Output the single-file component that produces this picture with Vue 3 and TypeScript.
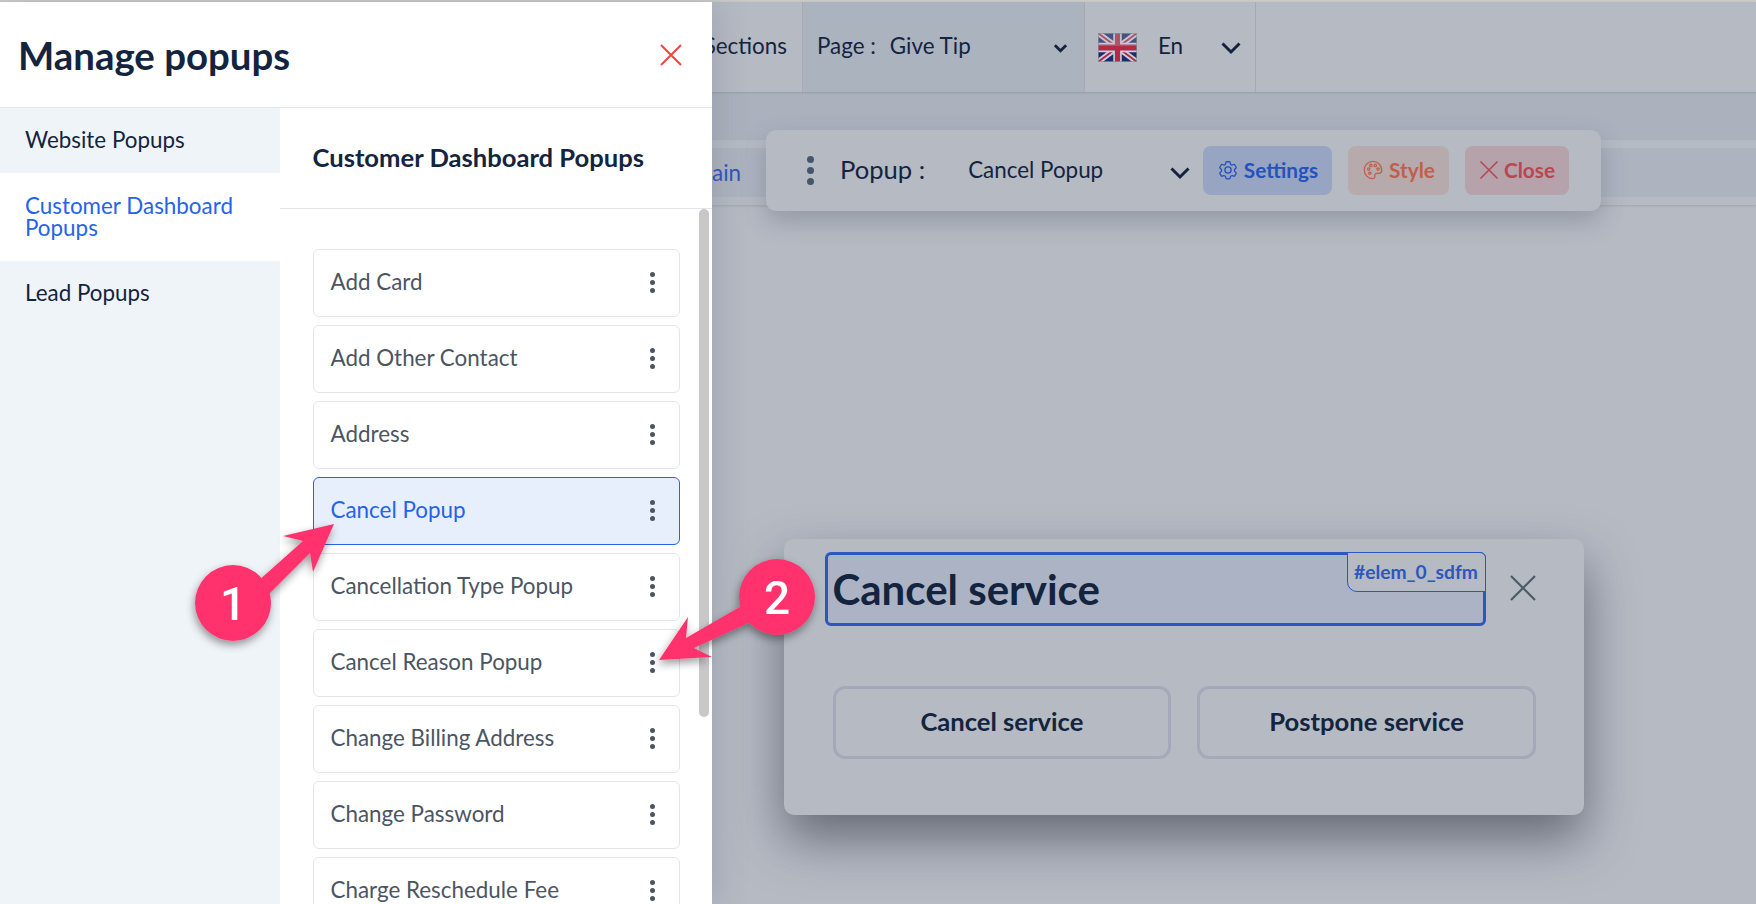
<script setup lang="ts">
const tabs = [
  { label: 'Website Popups', active: false },
  { label: 'Customer Dashboard Popups', active: true },
  { label: 'Lead Popups', active: false },
]

const popups = [
  'Add Card',
  'Add Other Contact',
  'Address',
  'Cancel Popup',
  'Cancellation Type Popup',
  'Cancel Reason Popup',
  'Change Billing Address',
  'Change Password',
  'Charge Reschedule Fee',
]

const gearPath =
  'M9.6 3.9c.1-.5.6-.9 1.1-.9h2.6c.5 0 1 .4 1.1.9l.2 1.3c.1.4.4.7.7.9l.5.3c.3.2.7.2 1.1.1l1.2-.5c.5-.2 1.1 0 1.4.5l1.3 2.2c.3.5.1 1.1-.3 1.4l-1 .8c-.3.3-.5.7-.5 1.1v.6c0 .4.2.8.5 1.1l1 .8c.4.3.6.9.3 1.4l-1.3 2.2c-.3.5-.9.7-1.4.5l-1.2-.5c-.4-.1-.8-.1-1.1.1l-.5.3c-.3.2-.6.5-.7.9l-.2 1.3c-.1.5-.6.9-1.1.9h-2.6c-.5 0-1-.4-1.1-.9l-.2-1.3c-.1-.4-.4-.7-.7-.9l-.5-.3c-.3-.2-.7-.2-1.1-.1l-1.2.5c-.5.2-1.1 0-1.4-.5l-1.3-2.2c-.3-.5-.1-1.1.3-1.4l1-.8c.3-.3.5-.7.5-1.1v-.6c0-.4-.2-.8-.5-1.1l-1-.8c-.4-.3-.6-.9-.3-1.4l1.3-2.2c.3-.5.9-.7 1.4-.5l1.2.5c.4.1.8.1 1.1-.1l.5-.3c.3-.2.6-.5.7-.9z'
</script>

<template>
  <div class="screen">
    <div class="topbar">
      <div class="cell cell--sections">Sections</div>
      <div class="cell cell--page">
        <span class="page-label">Page :</span>
        <span class="page-name">Give Tip</span>
        <svg class="chevron chevron--small" viewBox="0 0 16 10"><path d="M2 2l6 6 6-6" /></svg>
      </div>
      <div class="cell cell--lang">
        <svg class="flag" viewBox="0 0 60 40" preserveAspectRatio="none">
          <rect width="60" height="40" fill="#1c2a6e" />
          <path d="M0 0l60 40M60 0L0 40" stroke="#c9ced8" stroke-width="8" />
          <path d="M0 0l60 40M60 0L0 40" stroke="#b22a47" stroke-width="2.6" />
          <path d="M30 0v40M0 20h60" stroke="#c9ced8" stroke-width="13" />
          <path d="M30 0v40M0 20h60" stroke="#b22a47" stroke-width="8" />
          <rect width="60" height="18" fill="#b5bac3" opacity="0.28" />
          <rect x="0.5" y="0.5" width="59" height="39" fill="none" stroke="#8c919c" />
        </svg>
        <span class="lang-name">En</span>
        <svg class="chevron" viewBox="0 0 22 14"><path d="M2.5 2.5L11 11l8.5-8.5" /></svg>
      </div>
    </div>

    <div class="band"></div>
    <div class="strip">
      <div class="strip-inner"><span class="domain">Domain</span></div>
    </div>

    <div class="toolbar">
      <span class="grip"><i></i><i></i><i></i></span>
      <span class="toolbar-label">Popup :</span>
      <span class="toolbar-value">Cancel Popup</span>
      <svg class="chevron toolbar-chevron" viewBox="0 0 22 14"><path d="M2.5 2.5L11 11l8.5-8.5" /></svg>
      <button class="tool tool--settings">
        <svg class="tool-icon" viewBox="0 0 24 24">
          <path :d="gearPath" />
          <circle cx="12" cy="12" r="3.4" />
        </svg>
        Settings
      </button>
      <button class="tool tool--style">
        <svg class="tool-icon" viewBox="0 0 24 24">
          <path d="M12 2.500C6.500 2.500 2.500 6.800 2.500 12c0 5.300 4.200 9.500 9 9.500 2 0 2.800-1.300 2.500-2.800-.3-1.500.4-3 2.200-3h2.300c1.900 0 3-1.300 3-3.300 0-5.500-4.200-9.900-9.500-9.900z" />
          <circle cx="7.300" cy="11" r="1.300" />
          <circle cx="9.600" cy="7" r="1.300" />
          <circle cx="14.500" cy="7" r="1.300" />
          <circle cx="17.500" cy="11" r="1.300" />
          <circle cx="8.500" cy="15.500" r="1.300" />
        </svg>
        Style
      </button>
      <button class="tool tool--close">
        <svg class="tool-icon tool-icon--close" viewBox="0 0 20 20"><path d="M1.500 1.500l17 17M18.500 1.500l-17 17" /></svg>
        Close
      </button>
    </div>

    <div class="dialog">
      <div class="dialog-head">
        <div class="heading-box">
          <span class="heading-text">Cancel service</span>
          <span class="elem-tag">#elem_0_sdfm</span>
        </div>
        <svg class="dialog-x" viewBox="0 0 26 26"><path d="M1 1l24 24M25 1L1 25" /></svg>
      </div>
      <div class="dialog-actions">
        <button class="outline">Cancel service</button>
        <button class="outline">Postpone service</button>
      </div>
    </div>

    <aside class="drawer">
      <header class="drawer-head">
        <h1>Manage popups</h1>
        <svg class="drawer-x" viewBox="0 0 22 22"><path d="M1 1l20 20M21 1L1 21" /></svg>
      </header>
      <div class="drawer-body">
        <nav class="tabs">
          <a v-for="tab in tabs" :key="tab.label" class="tab" :class="{ 'tab--active': tab.active }">{{ tab.label }}</a>
          <div class="tabs-rest"></div>
        </nav>
        <section class="panel">
          <h2>Customer Dashboard Popups</h2>
          <div class="list">
            <div v-for="name in popups" :key="name" class="row" :class="{ 'row--active': name === 'Cancel Popup' }">
              <span class="row-name">{{ name }}</span>
              <span class="dots"><i></i><i></i><i></i></span>
            </div>
          </div>
          <div class="scrollbar"></div>
        </section>
      </div>
    </aside>

    <svg class="callouts" viewBox="0 0 1756 904">
      <defs>
        <filter id="callout-shadow" x="-30%" y="-30%" width="160%" height="160%">
          <feDropShadow dx="-1" dy="4" stdDeviation="4" flood-color="#000" flood-opacity="0.4" />
        </filter>
      </defs>
      <g class="callout" filter="url(#callout-shadow)">
        <polygon points="334,524 283,536 303,541 248,590 261,602 310,553 313,572" />
        <circle cx="233" cy="603" r="38" />
        <text x="233" y="620">1</text>
      </g>
      <g class="callout" filter="url(#callout-shadow)">
        <polygon points="659,660 688,617 686,638 745,604 755,620 694,648 712,657" />
        <circle cx="777" cy="597" r="38" />
        <text x="777" y="614">2</text>
      </g>
    </svg>
  </div>
</template>

<style>
html,
body {
  margin: 0;
  overflow: hidden;
}
</style>

<style scoped>
.screen {
  position: relative;
  width: 1756px;
  height: 904px;
  overflow: hidden;
  padding-top: 2px;
  box-sizing: border-box;
  background: #b5bac3;
  font-family: Lato, 'Liberation Sans', sans-serif;
  color: #14243f;
}

.screen::before {
  content: '';
  position: absolute;
  top: 0;
  left: 0;
  right: 0;
  height: 2px;
  background: #c9cac8;
}

.topbar {
  display: flex;
  height: 90px;
  font-size: 22.4px;
  box-shadow: 0 1px 2px rgba(80, 88, 104, 0.25);
  position: relative;
}

.cell {
  display: flex;
  align-items: center;
  border-right: 1px solid #a4abb7;
  box-sizing: border-box;
  padding-bottom: 3px;
}

.cell--sections {
  width: 803px;
  justify-content: flex-end;
  padding-right: 15px;
}

.cell--page {
  width: 282px;
  padding-left: 14px;
  background: #abb3bf;
}

.page-name {
  margin-left: 14px;
}

.chevron {
  flex: none;
  width: 22px;
  height: 14px;
  fill: none;
  stroke: #14243f;
  stroke-width: 3;
}

.chevron--small {
  width: 15px;
  height: 10px;
  margin-left: auto;
  margin-right: 16px;
  margin-top: 4px;
}

.cell--lang {
  width: 171px;
  padding-left: 13px;
}

.flag {
  width: 39px;
  height: 29px;
  margin-top: 3px;
}

.lang-name {
  margin-left: 21px;
}

.cell--lang .chevron {
  margin-left: 37px;
  margin-top: 5px;
}

.band {
  height: 48px;
  background: #abb2be;
}

.strip {
  height: 65px;
  padding: 8px 0;
  box-sizing: border-box;
  background: #b5bac3;
  box-shadow: 0 1px 2px rgba(80, 88, 104, 0.2);
}

.strip-inner {
  height: 49px;
  background: #adb3bf;
  display: flex;
  align-items: center;
  justify-content: flex-end;
  padding-right: 1015px;
}

.domain {
  color: #2b57c0;
  font-size: 22.4px;
}

.toolbar {
  position: absolute;
  left: 766px;
  top: 130px;
  width: 835px;
  height: 81px;
  box-sizing: border-box;
  display: flex;
  align-items: center;
  padding-left: 41px;
  border-radius: 10px;
  background: #b5bac3;
  box-shadow: 0 10px 24px rgba(70, 76, 90, 0.3);
}

.grip {
  display: flex;
  flex-direction: column;
  gap: 4px;
  width: 7px;
}

.grip i {
  width: 7px;
  height: 7px;
  border-radius: 50%;
  background: #46566a;
}

.toolbar-label {
  font-size: 25.6px;
  margin-left: 26px;
  padding-bottom: 4px;
}

.toolbar-value {
  font-size: 22.4px;
  margin-left: 43px;
  padding-bottom: 2px;
}

.toolbar-chevron {
  margin-left: auto;
  margin-top: 4px;
}

.tool {
  flex: none;
  display: flex;
  align-items: center;
  justify-content: center;
  gap: 5px;
  height: 49px;
  border: 0;
  padding: 0 0 2px;
  border-radius: 8px;
  font: 700 20.8px Lato, 'Liberation Sans', sans-serif;
}

.tool-icon {
  width: 22px;
  height: 22px;
  fill: none;
  stroke: currentColor;
  stroke-width: 1.4;
}

.tool-icon--close {
  width: 20px;
  height: 20px;
  stroke-width: 1.6;
}

.tool--settings {
  width: 129px;
  margin-left: 12px;
  background: #97a4c2;
  color: #2452be;
}

.tool--style {
  width: 101px;
  margin-left: 16px;
  background: #b6aaac;
  color: #c0604a;
}

.tool--close {
  width: 104px;
  margin: 0 32px 0 16px;
  background: #b5a2aa;
  color: #b54853;
}

.dialog {
  position: absolute;
  left: 784px;
  top: 539px;
  width: 800px;
  height: 276px;
  box-sizing: border-box;
  padding: 13px 48px 0 40.5px;
  border-radius: 10px;
  background: #b5bac3;
  box-shadow: 0 24px 50px rgba(50, 55, 68, 0.6);
}

.dialog-head {
  display: flex;
  align-items: flex-start;
}

.heading-box {
  position: relative;
  width: 661px;
  height: 74px;
  box-sizing: border-box;
  border: 3px solid #2b57c0;
  border-radius: 6px;
  background: #abb3c4;
  display: flex;
  align-items: center;
  padding-left: 5px;
}

.heading-text {
  font-size: 42px;
  font-weight: 700;
  color: #14243f;
}

.elem-tag {
  position: absolute;
  top: -3px;
  right: -3px;
  width: 139px;
  height: 40px;
  box-sizing: border-box;
  display: flex;
  align-items: center;
  justify-content: center;
  padding-bottom: 2px;
  border: 1px solid #2b57c0;
  border-radius: 0 6px 0 10px;
  background: #b5bac3;
  color: #2b57c0;
  font-size: 19.2px;
  font-weight: 700;
}

.dialog-x {
  flex: none;
  width: 26px;
  height: 26px;
  margin: 23px 0 0 24px;
  fill: none;
  stroke: #4d5a68;
  stroke-width: 2.2;
}

.dialog-actions {
  display: flex;
  gap: 26px;
  margin: 60px 0 0 8px;
}

.outline {
  width: 339px;
  height: 73px;
  padding: 0 0 4px;
  border: 3px solid #a4a9b9;
  border-radius: 12px;
  background: transparent;
  color: #14243f;
  font: 700 25.6px Lato, 'Liberation Sans', sans-serif;
}

.drawer {
  position: absolute;
  left: 0;
  top: 2px;
  bottom: 0;
  width: 712px;
  display: flex;
  flex-direction: column;
  background: #fff;
  box-shadow: 6px 0 30px rgba(70, 76, 90, 0.18);
}

.drawer-head {
  height: 106px;
  flex: none;
  box-sizing: border-box;
  border-bottom: 1px solid #e2e6ea;
  display: flex;
  align-items: center;
  justify-content: space-between;
  padding: 0 30px 0 18px;
}

.drawer-head h1 {
  margin: 0;
  font-size: 38.4px;
  font-weight: 700;
  color: #14243f;
}

.drawer-x {
  width: 22px;
  height: 22px;
  fill: none;
  stroke: #ef4444;
  stroke-width: 2;
}

.drawer-body {
  flex: 1;
  display: flex;
  min-height: 0;
}

.tabs {
  width: 280px;
  flex: none;
  display: flex;
  flex-direction: column;
}

.tab {
  display: flex;
  align-items: center;
  height: 65px;
  box-sizing: border-box;
  padding: 0 30px 1px 25px;
  background: #eff4f8;
  font-size: 22.4px;
  line-height: 22px;
  color: #14243f;
}

.tab--active {
  height: 88px;
  background: #fff;
  color: #2563eb;
}

.tabs-rest {
  flex: 1;
  background: #eff4f8;
}

.panel {
  position: relative;
  flex: 1;
  min-width: 0;
}

.panel h2 {
  margin: 0;
  height: 101px;
  box-sizing: border-box;
  display: flex;
  align-items: center;
  padding-left: 32.5px;
  padding-bottom: 2px;
  border-bottom: 1px solid #e2e6ea;
  font-size: 25.6px;
  font-weight: 700;
  color: #14243f;
}

.list {
  display: flex;
  flex-direction: column;
  gap: 8px;
  padding: 40px 32px 0 32.5px;
}

.row {
  flex: none;
  display: flex;
  align-items: center;
  justify-content: space-between;
  height: 68px;
  box-sizing: border-box;
  padding: 0 24px 0 17px;
  border: 1px solid #e2e6ea;
  border-radius: 6px;
  font-size: 22.4px;
  color: #4b5563;
}

.row-name {
  padding-bottom: 3px;
}

.row--active {
  background: #e8effc;
  border-color: #2563eb;
  color: #2563eb;
}

.dots {
  display: flex;
  flex-direction: column;
  gap: 3px;
  margin-bottom: 2px;
}

.dots i {
  width: 5px;
  height: 5px;
  border-radius: 50%;
  background: #4b5563;
}

.scrollbar {
  position: absolute;
  left: 419px;
  top: 101px;
  width: 10px;
  height: 508px;
  border-radius: 5px;
  background: #c8c8c8;
}

.callouts {
  position: absolute;
  left: 0;
  top: 0;
  width: 1756px;
  height: 904px;
  pointer-events: none;
}

.callout polygon,
.callout circle {
  fill: #ff336e;
}

.callout text {
  fill: #fff;
  font-family: Roboto, 'Liberation Sans', sans-serif;
  font-size: 46px;
  font-weight: 500;
  text-anchor: middle;
}
</style>
